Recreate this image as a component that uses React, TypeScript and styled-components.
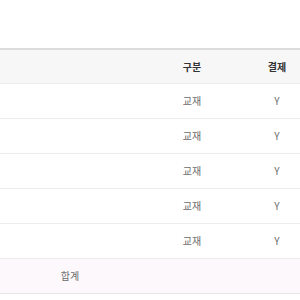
import styled, { createGlobalStyle } from 'styled-components'

const GlobalStyle = createGlobalStyle`
  html, body {
    margin: 0;
    padding: 0;
    background: #ffffff;
    font-family: "Noto Sans CJK KR", "Noto Sans", sans-serif;
  }
`

const Page = styled.div`
  width: 300px;
  height: 300px;
  padding-top: 48px;
  box-sizing: border-box;
  overflow: hidden;
`

const Table = styled.div`
  border-top: 2px solid #dcdcdc;
`

const Row = styled.div<{ $head?: boolean; $sum?: boolean }>`
  display: grid;
  grid-template-columns: ${p => (p.$sum ? '140px 1fr' : '1fr 124px 46px')};
  height: ${p => (p.$head ? '33px' : '34px')};
  align-items: center;
  border-bottom: 1px solid ${p => (p.$sum ? '#e6e6e6' : '#ececec')};
  background: ${p => (p.$head ? '#f7f7f8' : p.$sum ? '#fdf8fc' : '#ffffff')};
  font-size: 10px;
  color: ${p => (p.$head ? '#333333' : '#6b6b6b')};
  font-weight: ${p => (p.$head ? 700 : 400)};
`

const Cell = styled.div`
  text-align: center;
  line-height: 1;
`

const rows = Array.from({ length: 5 }, () => ({ kind: '교재', paid: 'Y' }))

export default function App() {
  return (
    <>
      <GlobalStyle />
      <Page>
        <Table>
          <Row $head>
            <Cell />
            <Cell>구분</Cell>
            <Cell>결제</Cell>
          </Row>
          {rows.map((r, i) => (
            <Row key={i}>
              <Cell />
              <Cell>{r.kind}</Cell>
              <Cell>{r.paid}</Cell>
            </Row>
          ))}
          <Row $sum>
            <Cell>합계</Cell>
            <Cell />
          </Row>
        </Table>
      </Page>
    </>
  )
}
